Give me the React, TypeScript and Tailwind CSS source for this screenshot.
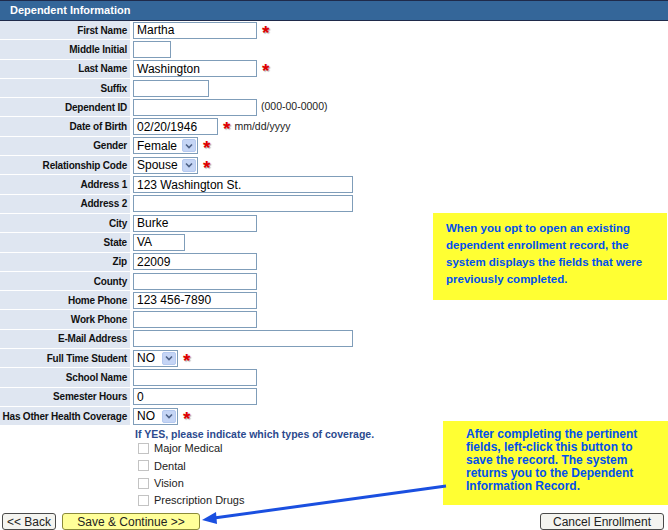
import { ReactNode } from "react";

type Row = {
  label: string;
  value?: string;
  width?: number;
  select?: boolean;
  required?: boolean;
  note?: string;
};

const rows: Row[] = [
  { label: "First Name", value: "Martha", width: 124, required: true },
  { label: "Middle Initial", width: 38 },
  { label: "Last Name", value: "Washington", width: 124, required: true },
  { label: "Suffix", width: 76 },
  { label: "Dependent ID", width: 124, note: "(000-00-0000)" },
  { label: "Date of Birth", value: "02/20/1946", width: 85, required: true, note: "mm/dd/yyyy" },
  { label: "Gender", value: "Female", width: 65, select: true, required: true },
  { label: "Relationship Code", value: "Spouse", width: 65, select: true, required: true },
  { label: "Address 1", value: "123 Washington St.", width: 220 },
  { label: "Address 2", width: 220 },
  { label: "City", value: "Burke", width: 124 },
  { label: "State", value: "VA", width: 52 },
  { label: "Zip", value: "22009", width: 124 },
  { label: "County", width: 124 },
  { label: "Home Phone", value: "123 456-7890", width: 124 },
  { label: "Work Phone", width: 124 },
  { label: "E-Mail Address", width: 220 },
  { label: "Full Time Student", value: "NO", width: 45, select: true, required: true },
  { label: "School Name", width: 124 },
  { label: "Semester Hours", value: "0", width: 124 },
  { label: "Has Other Health Coverage", value: "NO", width: 45, select: true, required: true },
];

const coverage = ["Major Medical", "Dental", "Vision", "Prescription Drugs"];

function Star() {
  return (
    <span className="ml-[5px] mt-[5px] self-center text-[19px] font-bold leading-[10px] text-[#e00000] [text-shadow:1px_1px_1px_#aaa]">
      *
    </span>
  );
}

function Field({ row }: { row: Row }) {
  if (row.select) {
    return (
      <div
        className="flex h-[17px] items-center border border-[#7f9db9] bg-white pl-[3px] text-[12px] text-black"
        style={{ width: row.width }}
      >
        <span className="flex-1 leading-none">{row.value}</span>
        <span className="mr-[1px] flex h-[13px] w-[14px] items-center justify-center rounded-[2px] border border-[#b5c9ef] bg-[#c5d5f5]">
          <svg width="8" height="6" viewBox="0 0 8 6">
            <path d="M1 1.5 L4 4.5 L7 1.5" stroke="#4d6185" strokeWidth="1.6" fill="none" />
          </svg>
        </span>
      </div>
    );
  }
  return (
    <div
      className="flex h-[17px] items-center border border-[#7f9db9] bg-white pl-[3px] text-[12px] leading-none text-black"
      style={{ width: row.width }}
    >
      {row.value}
    </div>
  );
}

function FormRow({ row }: { row: Row }): ReactNode {
  return (
    <div className="flex h-[19.3px] border-b border-white">
      <div className="flex w-[130px] shrink-0 items-center justify-end whitespace-nowrap bg-[#dfe6f1] pr-[3px] text-[10px] font-bold tracking-[-0.2px] text-[#111]">
        {row.label}
      </div>
      <div className="flex items-center pl-[3px]">
        <Field row={row} />
        {row.required && <Star />}
        {row.note && <span className="ml-[4px] text-[10.5px] text-[#222]">{row.note}</span>}
      </div>
    </div>
  );
}

function Btn({ children, className }: { children: ReactNode; className: string }) {
  return (
    <div
      className={`flex h-[17px] items-center justify-center rounded-[3px] border border-[#4a4a4a] text-[12px] leading-none text-[#222] ${className}`}
    >
      {children}
    </div>
  );
}

export default function App() {
  return (
    <div className="relative h-[530px] w-[668px] overflow-hidden bg-white font-['Liberation_Sans',Arial,sans-serif]">
      <div className="flex h-[21px] items-center border-y border-[#1f2a4a] bg-[#346699] pl-[10px] text-[11px] font-bold text-white">
        Dependent Information
      </div>

      <div className="flex flex-col">
        {rows.map((r) => (
          <FormRow key={r.label} row={r} />
        ))}
      </div>

      <div className="ml-[135px] mt-[1px] text-[10.5px] font-bold text-[#2b4a8e]">
        If YES, please indicate which types of coverage.
      </div>
      <div className="ml-[138px] mt-[-1px] flex flex-col gap-[4.3px]">
        {coverage.map((c) => (
          <div key={c} className="flex h-[13px] items-center gap-[5px] text-[11px] text-[#222]">
            <span className="h-[11px] w-[11px] border border-[#c3c3c3] bg-white" />
            {c}
          </div>
        ))}
      </div>

      <div className="absolute bottom-0 left-0 right-0 flex items-end justify-between px-[2px] pb-0">
        <div className="flex gap-[6px]">
          <Btn className="w-[54px] bg-[#f4f4f0]">&lt;&lt; Back</Btn>
          <Btn className="w-[138px] border-[#8a8a3a] bg-[#ffff99] text-[#4a4a2a]">Save &amp; Continue &gt;&gt;</Btn>
        </div>
        <Btn className="mr-[2px] w-[124px] bg-[#f4f4f0]">Cancel Enrollment</Btn>
      </div>

      <div className="absolute left-[433px] top-[213px] w-[234px] bg-[#ffff33] pb-[12px] pl-[13px] pr-[4px] pt-[7px] text-[11.5px] font-bold leading-[17px] text-[#0050ee]">
        When you opt to open an existing dependent enrollment record, the system displays the fields that were previously completed.
      </div>

      <div className="absolute left-[443px] top-[421px] w-[225px] bg-[#ffff33] pb-[12px] pl-[23px] pr-[6px] pt-[7px] text-[12px] font-bold leading-[13px] text-[#0050ee]">
        After completing the pertinent fields, left-click this button to save the record. The system returns you to the Dependent Information Record.
      </div>

      <svg className="absolute left-0 top-0" width="668" height="530" viewBox="0 0 668 530">
        <line x1="446" y1="486" x2="214" y2="518" stroke="#1a4fe0" strokeWidth="3" />
        <polygon points="202,520 216,512 217,524" fill="#1a4fe0" />
      </svg>
    </div>
  );
}
